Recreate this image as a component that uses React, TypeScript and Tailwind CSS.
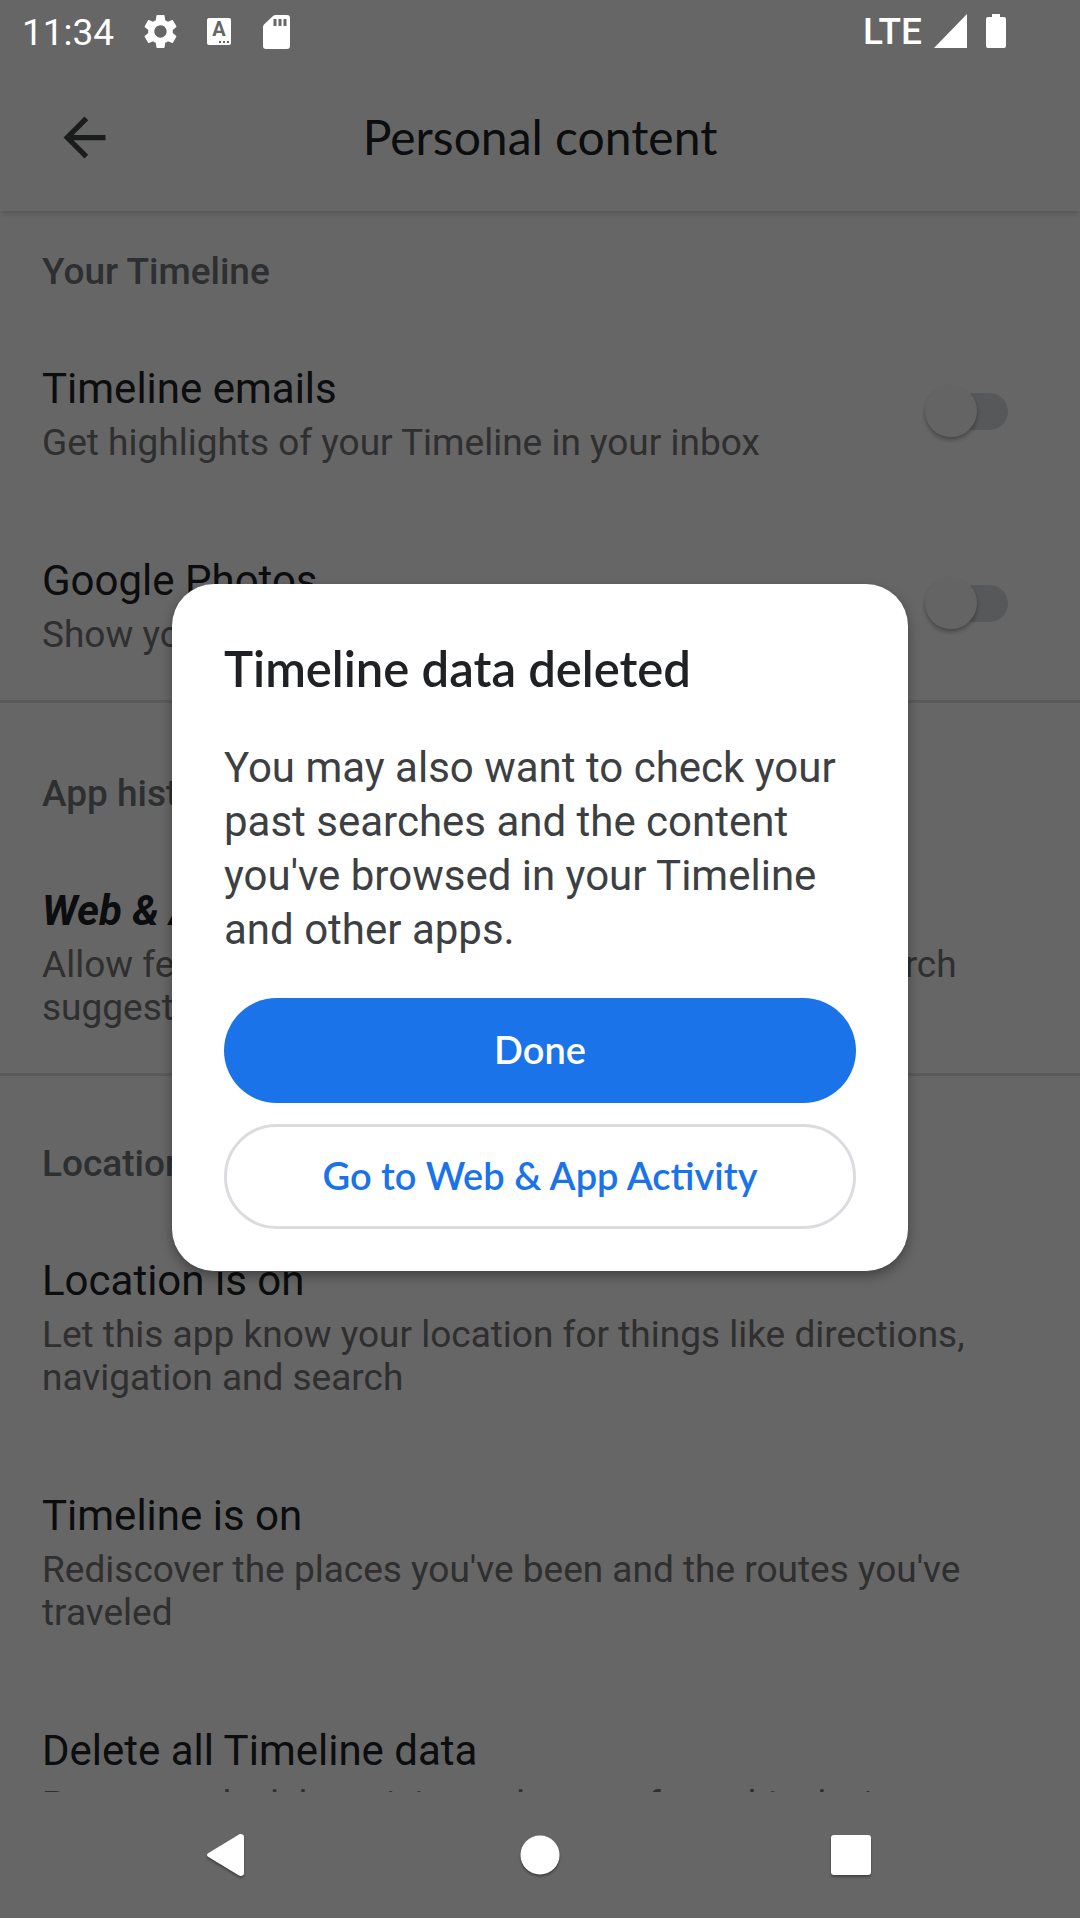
import type { ReactNode } from "react";
import { MdArrowBack, MdSettings } from "react-icons/md";

function StatusBar() {
  return (
    <div className="relative z-20 flex h-[63px] shrink-0 items-start pt-[10px] pr-[74px] pl-[22px] text-white">
      <span className="mt-[1px] w-[118px] text-[37px] leading-[44px]">11:34</span>
      <MdSettings className="mt-[1px] size-[41px]" />
      <span className="mt-2 ml-[26px] flex h-[27px] w-6 flex-col items-center rounded-[2px] bg-white text-[#666666]">
        <span className="text-[20px] leading-[23px] font-bold">A</span>
        <span className="flex gap-[2px] self-end pr-[2px]">
          <i className="size-[2px] bg-[#666666]" />
          <i className="size-[2px] bg-[#666666]" />
          <i className="size-[2px] bg-[#666666]" />
        </span>
      </span>
      <svg viewBox="0 0 27 34" className="mt-[5px] ml-8 h-[34px] w-[27px]" fill="currentColor" aria-hidden="true">
        <path
          fillRule="evenodd"
          d="M12.5 0H24a3 3 0 0 1 3 3v28a3 3 0 0 1-3 3H3a3 3 0 0 1-3-3V12c0-1 .3-1.800 1-2.500l9-8.500c.7-.7 1.500-1 2.500-1zM10.500 4v7h3V4zM15.500 4v7h3V4zM20.500 4v7h3V4z"
        />
      </svg>
      <span className="ml-auto text-[37px] leading-[44px] font-medium">LTE</span>
      <svg viewBox="0 0 33 34" className="mt-1 ml-3 h-[34px] w-[33px]" fill="currentColor" aria-hidden="true">
        <path d="M33 0v34H0z" />
      </svg>
      <svg viewBox="0 0 20 34" className="mt-1 ml-[19px] h-[34px] w-5" fill="currentColor" aria-hidden="true">
        <path d="M6 0h8v3h4a2 2 0 0 1 2 2v27a2 2 0 0 1-2 2H2a2 2 0 0 1-2-2V5a2 2 0 0 1 2-2h4z" />
      </svg>
    </div>
  );
}

function SectionTitle({ children }: { children: ReactNode }) {
  return <h2 className="px-[42px] pb-[23px] text-[37px] leading-[43px] font-medium text-[#70757a]">{children}</h2>;
}

type RowProps = { title: string; detail: string; emphasized?: boolean; toggleId?: string };

function Row({ title, detail, emphasized, toggleId }: RowProps) {
  const titleStyle = emphasized
    ? "text-[42px] leading-[49px] font-bold italic text-[#202124]"
    : "text-[42px] leading-[49px] text-[#202124]";
  return (
    <div className="flex items-center pr-[72px] pl-[42px]">
      <div className="min-w-0 flex-1 pt-12 pb-11">
        {toggleId ? (
          <label htmlFor={toggleId} className={"block " + titleStyle}>
            {title}
          </label>
        ) : (
          <h3 className={titleStyle}>{title}</h3>
        )}
        <p className="mt-2 text-[37px] leading-[43px] text-[#757575]">{detail}</p>
      </div>
      {toggleId && (
        <input
          id={toggleId}
          type="checkbox"
          role="switch"
          className="relative mb-[2px] ml-8 h-[37px] w-[78px] shrink-0 appearance-none rounded-full bg-[#dadce0] before:absolute before:-top-2 before:-left-[5px] before:size-[52px] before:rounded-full before:bg-[#fafafa] before:shadow-[0_3px_4px_rgba(0,0,0,0.3)] before:content-['']"
        />
      )}
    </div>
  );
}

function Dialog() {
  return (
    <div className="absolute inset-0 z-10 flex items-center justify-center bg-black/60 pt-[63px] pb-[126px]">
      <div
        role="dialog"
        aria-modal="true"
        aria-labelledby="dialog-title"
        className="w-[736px] max-w-[90%] rounded-[42px] bg-white px-[52px] pt-[54px] pb-[42px] shadow-[0_5px_12px_rgba(0,0,0,0.35)]"
      >
        <h2 id="dialog-title" className="font-[Lato,sans-serif] text-[49px] leading-[60px] font-semibold text-[#202124]">
          Timeline data deleted
        </h2>
        <p className="mt-[43px] text-[42px] leading-[54px] text-[#3c4043]">
          You may also want to check your past searches and the content you've browsed in your Timeline and other apps.
        </p>
        <div className="mt-[41px] flex flex-col gap-[21px] font-[Lato,sans-serif] text-[38px] leading-[44px] font-semibold">
          <button type="button" className="h-[105px] rounded-full bg-[#1a73e8] pb-1 text-white">
            Done
          </button>
          <button type="button" className="h-[105px] rounded-full border-[3px] border-[#dadce0] pb-1 text-[#1a73e8]">
            Go to Web &amp; App Activity
          </button>
        </div>
      </div>
    </div>
  );
}

function NavBar() {
  const button = "flex w-[315px] items-center justify-center";
  const icon = "size-[48px] drop-shadow-[0_2px_1px_rgba(0,0,0,0.35)]";
  return (
    <nav className="relative z-20 flex h-[126px] shrink-0 items-stretch justify-center text-white">
      <button type="button" aria-label="Back" className={button}>
        <svg viewBox="0 0 48 48" className={icon} fill="currentColor">
          <path d="M38 3.500c2-1 5 0 5 2v37c0 2-3 3-5 2L7.500 26c-2-1-2-3 0-4z" />
        </svg>
      </button>
      <button type="button" aria-label="Home" className={button}>
        <svg viewBox="0 0 48 48" className={icon} fill="currentColor">
          <circle cx="24" cy="24" r="19.500" />
        </svg>
      </button>
      <button type="button" aria-label="Overview" className={button}>
        <svg viewBox="0 0 48 48" className={icon} fill="currentColor">
          <rect x="0" y="4" width="40" height="40" rx="3" />
        </svg>
      </button>
    </nav>
  );
}

export default function App() {
  return (
    <div className="relative flex h-screen flex-col overflow-hidden bg-white font-[Roboto,sans-serif]">
      <StatusBar />
      <header className="relative grid h-[148px] shrink-0 grid-cols-[1fr_auto_1fr] items-center bg-white pl-[53px] shadow-[0_5px_6px_-2px_rgba(0,0,0,0.16)]">
        <button type="button" aria-label="Back" className="justify-self-start text-[#444648]">
          <MdArrowBack className="size-[63px]" />
        </button>
        <h1 className="pr-[53px] font-[Lato,sans-serif] text-[48px] leading-[60px] text-[#202124]">Personal content</h1>
      </header>
      <main className="min-h-0 flex-1 overflow-hidden">
        <section className="border-b-[3px] border-[#e0e0e0] pt-[39px]">
          <SectionTitle>Your Timeline</SectionTitle>
          <Row toggleId="timeline-emails" title="Timeline emails" detail="Get highlights of your Timeline in your inbox" />
          <Row toggleId="google-photos" title="Google Photos" detail="Show your Google Photos" />
        </section>
        <section className="border-b-[3px] border-[#e0e0e0] pt-[69px]">
          <SectionTitle>App history</SectionTitle>
          <Row
            emphasized
            title="Web & App Activity is on"
            detail="Allow features like recent searches and personal search suggestions"
          />
        </section>
        <section className="pt-[66px]">
          <SectionTitle>Location settings</SectionTitle>
          <Row title="Location is on" detail="Let this app know your location for things like directions, navigation and search" />
          <Row title="Timeline is on" detail="Rediscover the places you've been and the routes you've traveled" />
          <Row title="Delete all Timeline data" detail="Permanently delete visits and routes from this device" />
        </section>
      </main>
      <NavBar />
      <Dialog />
    </div>
  );
}
